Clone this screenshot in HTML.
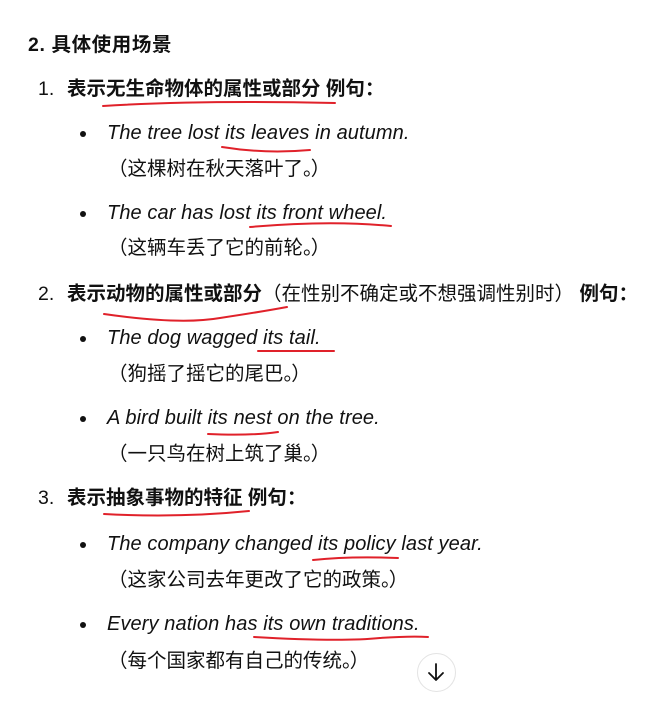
<!DOCTYPE html>
<html><head><meta charset="utf-8"><style>
body{margin:0;width:658px;height:717px;background:#fff;position:relative;overflow:hidden;font-family:"Liberation Sans","Noto Sans CJK SC",sans-serif;color:#111;font-size:19.5px}
.l{position:absolute;line-height:24px;white-space:nowrap}
.b,b{font-weight:bold}
.i{font-style:italic;font-size:20px;letter-spacing:0.1px}
.c{left:108px;top:0}
.n{margin-right:-2px}
.dot{position:absolute;width:6px;height:6px;border-radius:50%;background:#111}
svg{position:absolute;left:0;top:0}
</style></head><body>
<div class="l b" style="left:28px;top:33px;letter-spacing:0.6px">2. 具体使用场景</div>

<div class="l" style="left:38px;top:77px">1.</div>
<div class="l b" style="left:67px;top:77px">表示无生命物体的属性或部分 例句：</div>
<div class="dot" style="left:80px;top:131px"></div>
<div class="l i" style="left:107px;top:121px">The tree lost its leaves in autumn.</div>
<div class="l c" style="top:157px">（这棵树在秋天落叶了<span class="n">。</span>）</div>
<div class="dot" style="left:80px;top:211px"></div>
<div class="l i" style="left:107px;top:201px">The car has lost its front wheel.</div>
<div class="l c" style="top:236px">（这辆车丢了它的前轮<span class="n">。</span>）</div>

<div class="l" style="left:38px;top:282px">2.</div>
<div class="l" style="left:67px;top:282px"><b>表示动物的属性或部分</b>（在性别不确定或不想强调性别时） <b>例句：</b></div>
<div class="dot" style="left:80px;top:336px"></div>
<div class="l i" style="left:107px;top:326px">The dog wagged its tail.</div>
<div class="l c" style="top:362px">（狗摇了摇它的尾巴<span class="n">。</span>）</div>
<div class="dot" style="left:80px;top:416px"></div>
<div class="l i" style="left:107px;top:406px">A bird built its nest on the tree.</div>
<div class="l c" style="top:442px">（一只鸟在树上筑了巢<span class="n">。</span>）</div>

<div class="l" style="left:38px;top:486px">3.</div>
<div class="l b" style="left:67px;top:486px">表示抽象事物的特征 例句：</div>
<div class="dot" style="left:80px;top:542px"></div>
<div class="l i" style="left:107px;top:532px">The company changed its policy last year.</div>
<div class="l c" style="top:568px">（这家公司去年更改了它的政策<span class="n">。</span>）</div>
<div class="dot" style="left:80px;top:622px"></div>
<div class="l i" style="left:107px;top:612px">Every nation has its own traditions.</div>
<div class="l c" style="top:649px">（每个国家都有自己的传统<span class="n">。</span>）</div>

<div style="position:absolute;left:417px;top:653px;width:37px;height:37px;border:1px solid #e3e3e3;border-radius:50%;background:#fff"></div>
<svg width="658" height="717" fill="none" stroke-linecap="round">
<g stroke="#e0212a" stroke-width="2">
<path d="M103 106 Q200 100 335 103"/>
<path d="M222 147 Q265 154 310 150"/>
<path d="M250 227 Q330 220 391 226"/>
<path d="M104 314 Q180 325 220 318 Q260 312 287 307"/>
<path d="M258 351 L334 351"/>
<path d="M208 434 Q250 436 278 432"/>
<path d="M104 514 Q180 518 249 511"/>
<path d="M313 560 Q350 556 398 558"/>
<path d="M254 637 Q340 642 380 638 Q410 636 428 637"/>
</g>
<path d="M436 664 V680 M429 673 L436 680 L443 673" stroke="#111" stroke-width="1.8" stroke-linejoin="round"/>
</svg>
</body></html>
